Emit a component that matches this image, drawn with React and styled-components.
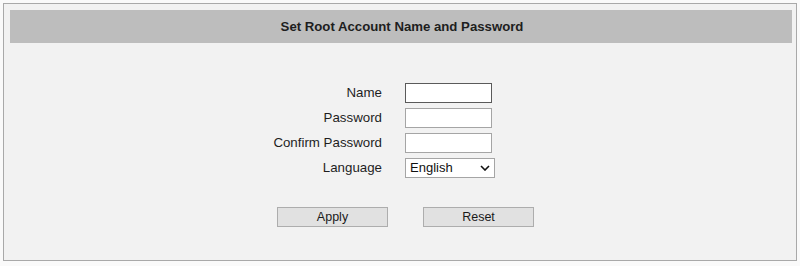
import React from "react";
import styled, { createGlobalStyle } from "styled-components";

const Global = createGlobalStyle`
  html, body { margin: 0; padding: 0; background: #fafafa; }
  body { font-family: "Liberation Sans", Arial, sans-serif; }
`;

const Panel = styled.div`
  margin: 3px 3px 0 3px;
  border: 1px solid #a9a9a9;
  background: #f2f2f2;
  padding: 6px 4px 34px 6px;
  height: 258px;
  box-sizing: border-box;
`;

const Header = styled.div`
  height: 33px;
  background: #bdbdbd;
  display: flex;
  align-items: center;
  justify-content: center;
  font-weight: bold;
  font-size: 13.2px;
  color: #1e1e1e;
  padding-left: 2px;
`;

const Form = styled.div`
  margin-top: 37px;
  display: grid;
  grid-template-columns: 1fr 1fr;
  grid-auto-rows: 25px;
`;

const Label = styled.div`
  display: flex;
  align-items: center;
  justify-content: flex-end;
  padding-right: 19px;
  font-size: 13.3px;
  color: #1e1e1e;
`;

const Field = styled.div`
  display: flex;
  align-items: center;
  padding-left: 4px;
`;

const TextInput = styled.input`
  box-sizing: border-box;
  width: 87px;
  height: 20px;
  margin: 0;
  padding: 0 3px;
  background: #fff;
  border: 1px solid ${(p) => (p.$focused ? "#5a5a5a" : "#a5a5a5")};
  outline: none;
  font-family: inherit;
  font-size: 13px;
`;

const SelectWrap = styled.div`
  position: relative;
  width: 90px;
  height: 20px;
`;

const Select = styled.select`
  appearance: none;
  -webkit-appearance: none;
  box-sizing: border-box;
  width: 100%;
  height: 100%;
  margin: 0;
  padding: 0 0 0 4px;
  background: #fff;
  border: 1px solid #a5a5a5;
  border-radius: 0;
  font-family: inherit;
  font-size: 13px;
  color: #111;
  outline: none;
`;

const Chevron = styled.svg`
  position: absolute;
  right: 5px;
  top: 7px;
  pointer-events: none;
`;

const Buttons = styled.div`
  margin-top: 27px;
  display: flex;
  justify-content: center;
  gap: 35px;
  padding-left: 9px;
`;

const Button = styled.button`
  box-sizing: border-box;
  width: 111px;
  height: 20px;
  margin: 0;
  padding: 0;
  background: #e1e1e1;
  border: 1px solid #adadad;
  border-radius: 0;
  font-family: inherit;
  font-size: 12.5px;
  color: #1a1a1a;
`;

export default function App() {
  return (
    <>
      <Global />
      <Panel>
        <Header>Set Root Account Name and Password</Header>
        <Form>
          <Label>Name</Label>
          <Field>
            <TextInput type="text" $focused />
          </Field>
          <Label>Password</Label>
          <Field>
            <TextInput type="password" />
          </Field>
          <Label>Confirm Password</Label>
          <Field>
            <TextInput type="password" />
          </Field>
          <Label>Language</Label>
          <Field>
            <SelectWrap>
              <Select defaultValue="en">
                <option value="en">English</option>
              </Select>
              <Chevron width="10" height="6" viewBox="0 0 10 6">
                <path d="M1 1 L5 5 L9 1" fill="none" stroke="#111" strokeWidth="1.6" />
              </Chevron>
            </SelectWrap>
          </Field>
        </Form>
        <Buttons>
          <Button>Apply</Button>
          <Button>Reset</Button>
        </Buttons>
      </Panel>
    </>
  );
}
